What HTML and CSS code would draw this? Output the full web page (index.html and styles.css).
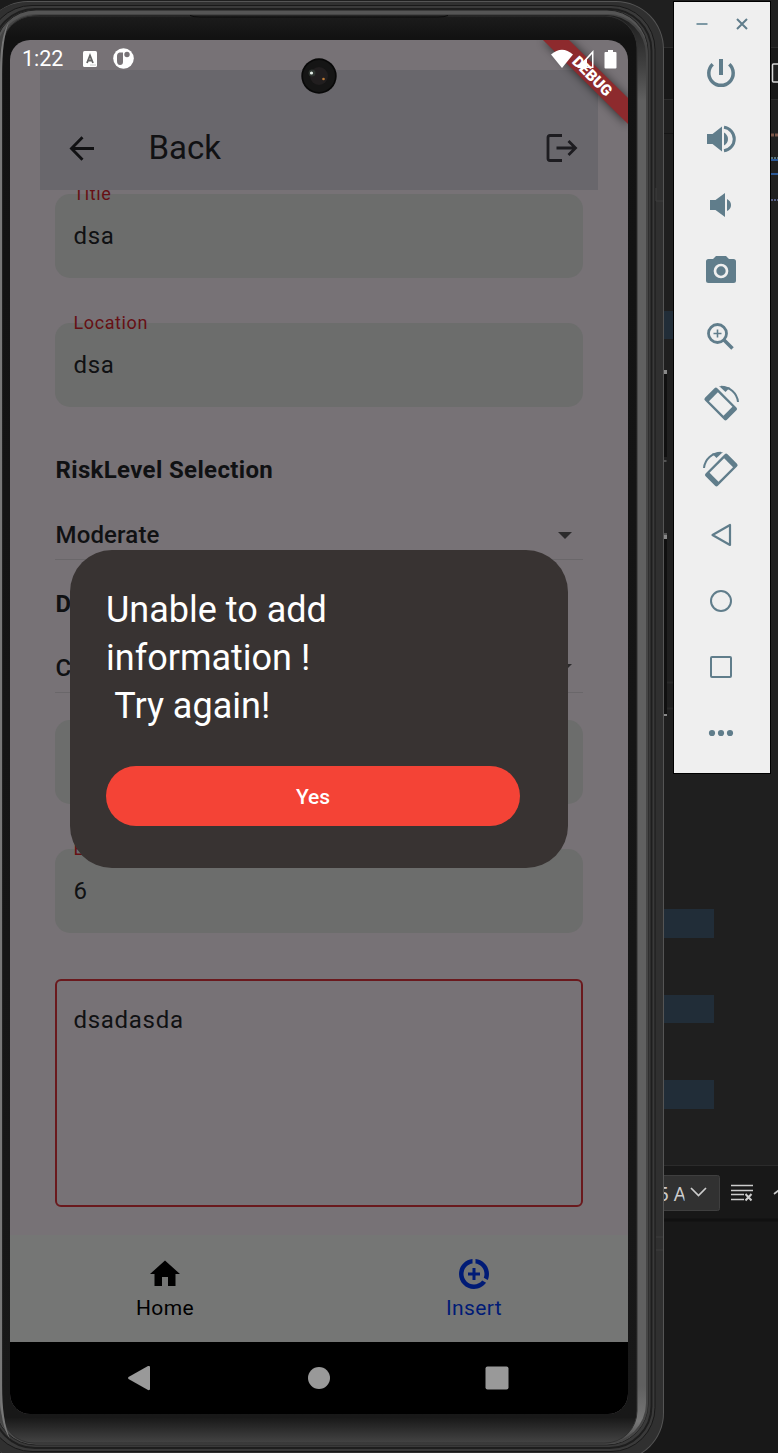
FILE: index.html
```html
<!DOCTYPE html>
<html lang="en">
<head>
<meta charset="utf-8">
<title>Emulator</title>
<link rel="stylesheet" href="styles.css">
</head>
<body>
<svg class="backdrop" width="778" height="1453" viewBox="0 0 778 1453">
  <rect width="778" height="1453" fill="#1f1f1f"/>
  <rect y="48" width="778" height="51" fill="#181818"/>
  <path d="M660 47.500H778M660 99.500H778" stroke="#2b2b2b"/>
  <path d="M660 133.500H674" stroke="#151515"/>
  <rect x="660" y="311" width="14" height="28" fill="#212d38"/>
  <path d="M660 682.500H674M660 708.500H674" stroke="#282828" stroke-width="2"/>
  <rect x="772.500" y="64" width="12" height="18" rx="1" fill="#1f1f1f" stroke="#d8d8d8" stroke-width="1.500"/>
  <path d="M771 135H778" stroke="#7a5548" stroke-width="3" stroke-dasharray="3 1"/>
  <path d="M771 158H778" stroke="#57737a" stroke-width="2" stroke-dasharray="2 1"/>
  <path d="M771 160H778M771 174H778" stroke="#2a5795" stroke-width="2"/>
  <path d="M771 200H778" stroke="#565f86" stroke-width="2" stroke-dasharray="2 1"/>
  <path d="M660 909h54v29h-54zM660 995h54v28h-54zM660 1080h54v29h-54z" fill="#212d38"/>
  <rect y="1165" width="778" height="288" fill="#181818"/>
  <path d="M660 1165.500H778" stroke="#2b2b2b"/>
  <path d="M660 1220H778" stroke="#111" stroke-width="3"/>
  <rect x="640" y="1175.500" width="79.500" height="35" rx="2" fill="#313131" stroke="#3f3f3f"/>
  <g fill="none" stroke="#ccc" stroke-width="1.700">
    <path d="M691 1188L698.500 1195.500L706 1188"/>
    <path d="M731 1185.500H753M731 1190.500H753M731 1194.500H744M731 1199.500H744" stroke-width="1.500"/>
    <path d="M745.500 1194L751.500 1200.500M751.500 1194L745.500 1200.500" stroke-width="2"/>
    <path d="M774 1194L779 1190"/>
  </g>
  <svg x="655" y="1176" width="29.500" height="34" viewBox="655 1176 29.500 34"><text class="backdrop-text" x="658" y="1201">5 A</text></svg>
</svg>

<main class="device">
  <svg class="frame" width="670" height="1453" viewBox="0 0 670 1453">
    <defs>
      <linearGradient id="bezel" x1="0" y1="0" x2="0" y2="1">
        <stop offset="0" stop-color="#1c1c1c"/><stop offset=".015" stop-color="#121212"/>
        <stop offset=".982" stop-color="#181818"/><stop offset="1" stop-color="#444"/>
      </linearGradient>
      <linearGradient id="rail" x1="0" y1="0" x2="0" y2="1">
        <stop offset="0" stop-color="#1c1c1c"/><stop offset=".035" stop-color="#404040"/><stop offset=".06" stop-color="#606060"/>
        <stop offset=".96" stop-color="#606060"/><stop offset=".985" stop-color="#777"/><stop offset="1" stop-color="#444"/>
      </linearGradient>
    </defs>
    <rect width="130" height="40" fill="#1b1b1b"/>
    <path d="M663 373h4v84h-4zM663 539h4v177h-4z" fill="#101010"/>
    <path d="M664 370h3v4h-3zM664 535h3v4h-3zM664 714h3v2h-3z" fill="#888"/>
    <path d="M664 461H666.500M663.500 461V534H667" fill="none" stroke="#888"/>
    <rect x="-20" y="1" width="684" height="1460" rx="48" fill="#555"/>
    <rect x="-20" y="2" width="683" height="1458" rx="47" fill="#303030"/>
    <rect x="-12" y="5.500" width="667" height="1446" rx="44" fill="#3a3a3a" stroke="#191919"/>
    <rect x="-7" y="9" width="658.500" height="1439" rx="42" fill="#3a3a3a" stroke="#1e1e1e" stroke-width="2"/>
    <rect x="-5" y="10" width="653" height="1435" rx="41" fill="#555" stroke="#222"/>
    <rect x="-4" y="14" width="652" height="1430" rx="40" fill="#454545"/>
    <rect x="0" y="15" width="646" height="1428" rx="40" fill="url(#rail)"/>
    <rect x="2" y="16" width="635" height="1427" rx="32" fill="url(#bezel)" stroke="#303030"/>
    <path d="M0 70Q0 36 9 22Q2 40 2 75V1385Q2 1420 10 1439Q0 1425 0 1390Z" fill="#777"/>
    <path d="M190 15.500Q193 17 200 17H438Q445 17 448 15.500" fill="none" stroke="#0b0b0b"/>
    <path d="M656 188V201H663M656 1237H663M656 1250H663" fill="none" stroke="#3c3c3c"/>
  </svg>

  <section class="screen">
    <header class="app-bar">
      <svg width="26" height="26" viewBox="0 0 26 26" fill="none" stroke="#111113" stroke-width="2.900"><path d="M25 13.500H2.500M13.500 2.300L2.500 13.500L13.500 24.700"/></svg>
      <h1 class="app-title">Back</h1>
      <svg width="32" height="28" viewBox="0 0 32 28" fill="none" stroke="#1d1c20" stroke-width="2.800"><path d="M16 1.500H4Q2 1.500 2 3.500V24.500Q2 26.500 4 26.500H16M10.500 14H30M22.500 7L29.500 14L22.500 21"/></svg>
    </header>

    <form class="form">
      <div class="field"><label class="field-label">Title</label>dsa</div>
      <div class="field"><label class="field-label">Location</label>dsa</div>
      <div class="group">
        <h2 class="group-title">RiskLevel Selection</h2>
        <div class="select">Moderate<i class="caret"></i></div>
      </div>
      <div class="group group-second">
        <h2 class="group-title">D</h2>
        <div class="select">C<i class="caret"></i></div>
      </div>
      <div class="field field-after"></div>
      <div class="field"><label class="field-label">E</label>6</div>
      <div class="textarea">dsadasda</div>
    </form>

    <nav class="tabs">
      <div class="tab">
        <svg width="36" height="36" viewBox="0 0 24 24"><path d="M10 20v-6h4v6h5v-8h3L12 3 2 12h3v8z"/></svg>
        <span>Home</span>
      </div>
      <div class="tab tab-active">
        <svg width="36" height="36" viewBox="0 0 24 24"><path d="M11 8v3H8v2h3v3h2v-3h3v-2h-3V8h-2zm2-5.950v3.030c3.390.49 6 3.390 6 6.920 0 .9-.18 1.750-.48 2.540l2.600 1.530c.56-1.240.88-2.620.88-4.070 0-5.180-3.950-9.450-9-9.950zM12 19c-3.870 0-7-3.130-7-7 0-3.530 2.610-6.430 6-6.920V2.050c-5.060.5-9 4.760-9 9.950 0 5.520 4.470 10 9.990 10 3.310 0 6.240-1.610 8.060-4.090l-2.600-1.530C16.170 17.980 14.210 19 12 19z"/></svg>
        <span>Insert</span>
      </div>
    </nav>

    <nav class="system-nav">
      <svg width="24" height="26" viewBox="0 0 24 26"><path d="M1.500 12Q.5 13 1.500 14L21 25Q23 25.500 23 24V2Q23 .5 21 1Z"/></svg>
      <svg width="24" height="24" viewBox="0 0 24 24"><circle cx="13" cy="12" r="11"/></svg>
      <svg width="24" height="24" viewBox="0 0 24 24"><rect x=".5" y=".5" width="23" height="23" rx="2"/></svg>
    </nav>

    <svg class="ribbon" width="100" height="110" viewBox="518 0 100 110">
      <defs><filter id="soft" x="-30%" y="-30%" width="160%" height="160%"><feGaussianBlur stdDeviation="5"/></filter></defs>
      <path d="M533 0H559L618 59V85Z" fill="#000" opacity=".6" filter="url(#soft)"/>
      <path d="M533 0H559L618 58V84Z" fill="#8d2a2d"/>
      <text class="ribbon-text" transform="translate(582.500 36) rotate(45)" text-anchor="middle" y="5.500">DEBUG</text>
    </svg>

    <div class="status-bar">
      <span>1:22</span>
      <svg class="status-app" width="14" height="16" viewBox="0 0 14 16"><rect width="14" height="16" rx="1.500" fill="#fff"/><path d="M4 12L7 4.500L10 12M5 9.500H9" fill="none" stroke="#666" stroke-width="1.800"/><path d="M7.500 14H13" stroke="#999" stroke-dasharray="1 1"/></svg>
      <svg class="status-round" width="21" height="21" viewBox="0 0 21 21"><circle cx="10.500" cy="10.500" r="10.300" fill="#fff"/><path d="M10 4.500H6.500Q4 5 4 8V13Q4 17 7 17Q10 17 10 14Z" fill="#777276"/><circle cx="14" cy="6.500" r="2.700" fill="#777276"/></svg>
      <svg class="status-icons" width="66" height="20" viewBox="0 0 66 20" fill="#fff"><path d="M0 5.500Q11 -4 22 5.500L11 19Z"/><path d="M42.500 1V19H26ZM41 5L36 10.500V17.500H41Z" fill-rule="evenodd"/><path d="M57 1h5v2h2.500q1 0 1 1V18.500q0 1-1 1H54.500q-1 0-1-1V4q0-1 1-1H57z"/></svg>
    </div>

    <svg class="camera" width="36" height="36" viewBox="0 0 36 36"><circle cx="18" cy="18" r="17.700" fill="#080808"/><circle cx="18" cy="18" r="16" fill="#151515"/><circle cx="18" cy="18" r="9" fill="#211e1f"/><circle cx="11" cy="15" r="3.500" fill="#2e3430"/><circle cx="10.500" cy="15" r="1.600" fill="#e4eee7"/><circle cx="22.500" cy="21" r="1.300" fill="#bd7a36"/></svg>

    <div class="dialog">
      <p class="dialog-text">Unable to add
information !
 Try again!</p>
      <button class="dialog-button">Yes</button>
    </div>
  </section>
</main>

<aside class="toolbar">
  <div class="window-buttons">
    <svg width="12" height="12" viewBox="0 0 12 12"><path d="M.5 6H11.500" stroke-width="2" stroke="#7d98a4"/></svg>
    <svg width="12" height="12" viewBox="0 0 12 12"><path d="M1 1L11 11M11 1L1 11"/></svg>
  </div>
  <div class="tool"><svg width="40" height="40" viewBox="-20 -20 40 40"><path d="M-8.300-8.800A12.200 12.200 0 1 0 8.300-8.800" stroke-width="3.500"/><path d="M0-14V2" stroke-width="4"/></svg></div>
  <div class="tool"><svg width="40" height="40" viewBox="-20 -20 40 40"><path class="solid" d="M-14-5H-8.500L1-12.500V12.500L-8.500 5H-14ZM3-6.500Q7-4 7 0Q7 4 3 6.500Z"/><path d="M3-11.700A11.800 11.800 0 0 1 3 11.700" stroke-width="3"/></svg></div>
  <div class="tool"><svg width="40" height="40" viewBox="-20 -20 40 40"><path class="solid" d="M-11-5H-5.500L4-12V12L-5.500 5H-11ZM6-6Q10-4 10 0Q10 4 6 6Z"/></svg></div>
  <div class="tool"><svg width="40" height="40" viewBox="-20 -20 40 40"><path class="solid" d="M-12.500-12H-8L-5-15H5L8-12H12.500Q15-12 15-9.500V9.500Q15 12 12.500 12H-12.500Q-15 12-15 9.500V-9.500Q-15-12-12.500-12Z"/><circle r="6" stroke="#efefef" stroke-width="2.700"/></svg></div>
  <div class="tool"><svg width="40" height="40" viewBox="-20 -20 40 40"><circle cx="-3.500" cy="-3.500" r="9" stroke-width="2.800"/><path d="M3 3L11.500 11.500" stroke-width="3.500"/><path d="M-7.500-3.500H.5M-3.500-7.500V.5" stroke-width="1.600"/></svg></div>
  <div class="tool"><svg width="40" height="40" viewBox="-20 -20 40 40"><g id="turn"><g transform="translate(-.3 1) rotate(45)"><rect class="solid" x="-15.500" y="-8.700" width="31" height="17.400" rx="2"/><rect class="hole" x="-10.300" y="-6.300" width="20.600" height="12.600"/></g><path d="M0-16.300A17 17 0 0 1 17-1" stroke-width="2"/><path class="solid" d="M-2-17L9-15.500L4.500-11Z"/></g></svg></div>
  <div class="tool"><svg width="40" height="40" viewBox="-20 -20 40 40"><use href="#turn" transform="scale(-1 1)"/></svg></div>
  <div class="tool"><svg width="40" height="40" viewBox="-20 -20 40 40"><path d="M9-10V10L-8.500 0Z" stroke-width="2.200" stroke-linejoin="round"/></svg></div>
  <div class="tool"><svg width="40" height="40" viewBox="-20 -20 40 40"><circle r="10" stroke-width="2"/></svg></div>
  <div class="tool"><svg width="40" height="40" viewBox="-20 -20 40 40"><rect x="-10" y="-10" width="20" height="20" rx="1" stroke-width="2"/></svg></div>
  <div class="tool"><svg width="40" height="40" viewBox="-20 -20 40 40"><g class="solid"><circle cx="-9" r="3.100"/><circle r="3.100"/><circle cx="9" r="3.100"/></g></svg></div>
</aside>
</body>
</html>
```

FILE: styles.css
```css
* { box-sizing: border-box; }

body {
  position: relative;
  display: flex;
  align-items: flex-start;
  gap: 9px;
  width: 778px;
  height: 1453px;
  margin: 0;
  overflow: hidden;
  background: #1f1f1f;
  font-family: Roboto, "Liberation Sans", sans-serif;
}

svg { display: block; flex: none; }

.backdrop { position: absolute; inset: 0; }
.backdrop-text { font: 19px "Noto Sans", sans-serif; fill: #ccc; }

.device {
  position: relative;
  flex: none;
  width: 664px;
  height: 1453px;
  padding: 40px 36px 39px 10px;
}

.frame { position: absolute; top: 0; left: 0; }

.screen {
  position: relative;
  display: flex;
  flex-direction: column;
  height: 1374px;
  overflow: hidden;
  border-radius: 20px;
  background: #777276;
}

.app-bar {
  display: flex;
  flex: none;
  align-items: center;
  height: 120px;
  margin: 30px 30px 0;
  padding: 36px 20px 0 29px;
  background: #69676c;
}

.app-title {
  flex: 1;
  margin: 0 0 0 53.500px;
  font-size: 33px;
  font-weight: 400;
  line-height: 42px;
  color: #111113;
}

.form {
  flex: none;
  height: 1045px;
  padding: 4px 45px 0;
  overflow: hidden;
  font-size: 24px;
  color: #101113;
}

.field {
  position: relative;
  height: 84px;
  margin-bottom: 45px;
  padding: 0 18.500px;
  border-radius: 15px;
  background: #6c6d6c;
  line-height: 85px;
  letter-spacing: .7px;
}

.field-label {
  position: absolute;
  top: -12px;
  left: 18.500px;
  font-size: 18px;
  line-height: 24px;
  letter-spacing: .6px;
  color: #661014;
}

.group {
  height: 107.500px;
  margin-top: 46px;
}

.group-second {
  height: 106.500px;
  margin-top: 26px;
}

.group-title {
  margin: 0 0 24px;
  padding-left: .5px;
  font-size: 24px;
  font-weight: 700;
  line-height: 35px;
  letter-spacing: .35px;
}

.group-second .group-title { margin-bottom: 23px; }

.select {
  display: flex;
  align-items: center;
  justify-content: space-between;
  height: 48px;
  padding: 0 11px 1px .5px;
  border-bottom: 1px solid #6a676a;
  font-weight: 500;
  letter-spacing: .15px;
}

.caret {
  border: 7.500px solid transparent;
  border-top-color: #2c2b2c;
  border-bottom: 0;
}

.field-after { margin-top: 27px; }

.textarea {
  height: 228px;
  margin-top: 46px;
  padding: 24px 16.500px;
  border: 2px solid #6a191d;
  border-radius: 6px;
  line-height: 30px;
  letter-spacing: .7px;
}

.tabs {
  display: grid;
  flex: none;
  grid-template-columns: 1fr 1fr;
  height: 107px;
  padding-top: 21px;
  background: #757675;
  font-size: 21px;
  letter-spacing: .4px;
}

.tab {
  display: flex;
  flex-direction: column;
  align-items: center;
  line-height: 32px;
}

.tab span { padding-left: 1px; }

.tab-active { color: #001b76; fill: #001b76; }

.system-nav {
  display: flex;
  flex: none;
  align-items: center;
  justify-content: space-between;
  height: 72px;
  padding: 0 119px 0 117px;
  background: #000;
  fill: #999;
}

.ribbon { position: absolute; top: 0; right: 0; }
.ribbon-text { font-size: 15.300px; font-weight: 900; fill: #fff; }

.status-bar {
  position: absolute;
  top: 0;
  left: 0;
  display: flex;
  align-items: center;
  width: 100%;
  height: 37px;
  padding: 0 11px 0 12px;
  font-size: 21.500px;
  color: #fff;
}

.status-app { margin-left: 20px; }
.status-round { margin-left: 16px; }
.status-icons { margin-left: auto; }

.camera { position: absolute; top: 18px; left: 291px; }

.dialog {
  position: absolute;
  top: 510px;
  left: 60px;
  width: 498px;
  height: 318px;
  padding: 36px 48px 42px 36px;
  border-radius: 42px;
  background: #383332;
}

.dialog-text {
  margin: 0 0 36px;
  font-size: 36px;
  line-height: 48px;
  white-space: pre;
  color: #fff;
}

.dialog-button {
  display: block;
  width: 100%;
  height: 60px;
  padding: 2px 0 0;
  border: 0;
  border-radius: 30px;
  background: #f44336;
  font: 500 21px Roboto, sans-serif;
  color: #fff;
}

.toolbar {
  position: relative;
  flex: none;
  width: 98px;
  height: 773px;
  margin-top: 1px;
  padding-right: 2px;
  border: 1px solid #000;
  background: #efefef;
  fill: none;
  stroke: #607d8b;
  stroke-width: 2;
}

.window-buttons {
  display: flex;
  align-items: center;
  justify-content: center;
  gap: 28px;
  height: 38px;
  padding: 6px 0 0 2px;
}

.tool {
  display: flex;
  align-items: center;
  justify-content: center;
  height: 66px;
}

.solid { fill: #607d8b; stroke: none; }
.hole { fill: #efefef; stroke: none; }
```
